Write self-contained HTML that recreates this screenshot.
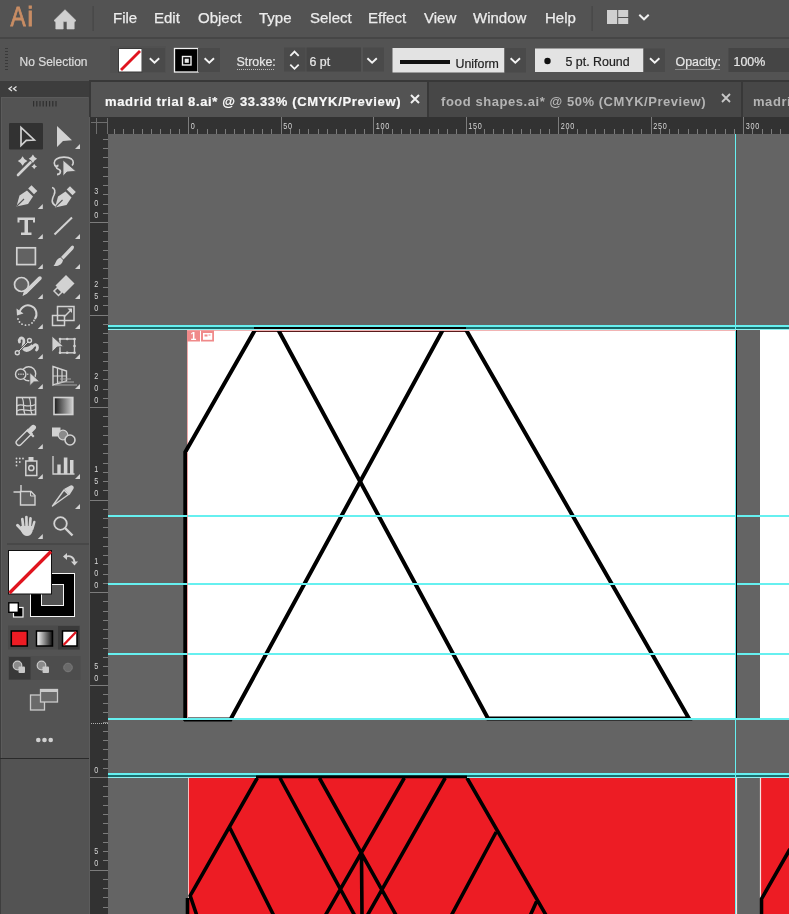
<!DOCTYPE html>
<html><head><meta charset="utf-8">
<style>
*{margin:0;padding:0;box-sizing:border-box}
html,body{width:789px;height:914px;overflow:hidden;background:#535353;font-family:"Liberation Sans",sans-serif}
.a{position:absolute;will-change:transform}
#menubar{left:0;top:0;width:789px;height:38px;background:#535353}
.mi{position:absolute;top:10px;font-size:15px;color:#ececec;line-height:16px;white-space:nowrap;-webkit-text-stroke:0.25px #ececec}
#ctrl{left:0;top:38px;width:789px;height:43px;background:#535353}
.ct{position:absolute;font-size:12.4px;color:#e6e6e6;line-height:14px;white-space:nowrap;-webkit-text-stroke:0.2px currentColor}
.dd{position:absolute;background:#4a4a4a}
#tabs{left:90px;top:81px;width:699px;height:36px;background:#3e3e3e}
#panelhead{left:0;top:81px;width:89px;height:16px;background:#3d3d3d}
#toolbar{left:0;top:97px;width:89px;height:661px;background:#535353}
#hruler{left:91px;top:117px;width:698px;height:17px;background:#323232}
#vruler{left:90px;top:117px;width:18px;height:797px;background:#323232}
#canvas{left:108px;top:134px;width:681px;height:780px;background:#646464;overflow:hidden}
</style></head><body>
<div id="menubar" class="a">
  <svg class="a" style="left:0;top:0" width="60" height="38"><g font-family="Liberation Sans" font-size="27" fill="#c98d64" stroke="#c98d64" stroke-width="0.8"><text x="10.4" y="26.4" textLength="15.2" lengthAdjust="spacingAndGlyphs">A</text><text x="27.2" y="26.4">i</text></g></svg>
<svg class="a" style="left:0;top:0" width="789" height="38">
<path d="M65 9.7L54 20.6L55.8 22.2V29H63.2V21.6H67V29H74.2V22.2L76 20.6Z" fill="#d0d0d0" stroke="#d0d0d0" stroke-width="0.6" stroke-linejoin="round"/>
<rect x="92.5" y="6" width="1.2" height="25" fill="#474747"/>
<rect x="591.5" y="6" width="1.2" height="25" fill="#474747"/>
<rect x="607" y="10" width="10.2" height="14" fill="#d0d0d0"/>
<rect x="618.2" y="10" width="10" height="7" fill="#d0d0d0"/>
<rect x="618.2" y="18" width="10" height="6" fill="#d0d0d0"/>
<path d="M639.3 14.8L644 19.3L648.7 14.8" stroke="#f0f0f0" stroke-width="2" fill="none"/>
</svg>
  <div class="mi" style="left:113px">File</div>
  <div class="mi" style="left:154px">Edit</div>
  <div class="mi" style="left:198px">Object</div>
  <div class="mi" style="left:259px">Type</div>
  <div class="mi" style="left:310px">Select</div>
  <div class="mi" style="left:368px">Effect</div>
  <div class="mi" style="left:424px">View</div>
  <div class="mi" style="left:473px">Window</div>
  <div class="mi" style="left:545px">Help</div>
</div>
<div id="ctrl" class="a"></div>
<div class="a" style="left:0;top:37px;width:789px;height:2px;background:#464646"></div>
<div class="ct" style="left:19.5px;top:55.3px;color:#dcdcdc;font-size:12px">No Selection</div>
<svg class="a" style="left:0;top:38px" width="789" height="43" viewBox="0 38 789 43">
<!-- grip -->
<g fill="#3a3a3a">
<rect x="5" y="48" width="3" height="1"/><rect x="5" y="51" width="3" height="1"/><rect x="5" y="54" width="3" height="1"/><rect x="5" y="57" width="3" height="1"/><rect x="5" y="60" width="3" height="1"/><rect x="5" y="63" width="3" height="1"/><rect x="5" y="66" width="3" height="1"/><rect x="5" y="69" width="3" height="1"/>
</g>
<!-- fill swatch -->
<rect x="110" y="46" width="56" height="27" fill="#505050"/>
<rect x="118.5" y="48.5" width="23.5" height="23.5" fill="#fff" stroke="#3a3a3a" stroke-width="1"/>
<line x1="121" y1="70" x2="140" y2="51" stroke="#e0141e" stroke-width="2.8"/>
<rect x="142" y="48" width="23" height="24" fill="#4a4a4a"/>
<path d="M149.8 58.2L154.5 62.6L159.2 58.2" stroke="#f4f4f4" stroke-width="1.9" fill="none"/>
<!-- stroke swatch -->
<rect x="174.5" y="48.5" width="23.5" height="23.5" fill="#000" stroke="#f0f0f0" stroke-width="1.3"/>
<rect x="182.5" y="56.5" width="8.5" height="8.5" fill="none" stroke="#f0f0f0" stroke-width="1.4"/>
<rect x="184.7" y="58.7" width="4.1" height="4.1" fill="#e8e8e8"/>
<rect x="198" y="48" width="22" height="24" fill="#4a4a4a"/>
<path d="M204.6 58.2L209.3 62.6L214.0 58.2" stroke="#f4f4f4" stroke-width="1.9" fill="none"/>
<!-- stroke label underline -->
<line x1="237" y1="69.5" x2="275" y2="69.5" stroke="#bdbdbd" stroke-width="1" stroke-dasharray="1 1"/>
<!-- spinner -->
<rect x="284" y="47.5" width="21.5" height="24" fill="#4a4a4a"/>
<path d="M290.3 55.8L294.5 51.6L298.7 55.8M290.3 64.6L294.5 68.8L298.7 64.6" stroke="#f4f4f4" stroke-width="1.8" fill="none"/>
<rect x="306.5" y="47.5" width="54.5" height="24" fill="#454545"/>
<rect x="363" y="47.5" width="21" height="24" fill="#4a4a4a"/>
<path d="M367.4 58.2L372.1 62.6L376.8 58.2" stroke="#f4f4f4" stroke-width="1.9" fill="none"/>
<!-- uniform -->
<rect x="392.5" y="48" width="112" height="24.5" fill="#e3e3e3"/>
<rect x="400" y="60" width="50" height="4" fill="#111"/>
<rect x="504.5" y="48" width="21.5" height="24.5" fill="#4a4a4a"/>
<path d="M510.6 58.2L515.3 62.6L520.0 58.2" stroke="#f4f4f4" stroke-width="1.9" fill="none"/>
<!-- 5pt round -->
<rect x="535" y="48.5" width="108.5" height="23.5" fill="#e3e3e3"/>
<circle cx="547.5" cy="61" r="3.2" fill="#111"/>
<rect x="643.5" y="48.5" width="21.5" height="23.5" fill="#4a4a4a"/>
<path d="M650.0 58.2L654.7 62.6L659.4 58.2" stroke="#f4f4f4" stroke-width="1.9" fill="none"/>
<line x1="675.5" y1="69.5" x2="720" y2="69.5" stroke="#bdbdbd" stroke-width="1" stroke-dasharray="1 1"/>
<rect x="728.5" y="48" width="70" height="24" fill="#454545"/>
</svg>
<div class="ct" style="left:236.5px;top:54.5px">Stroke:</div>
<div class="ct" style="left:309.5px;top:55px">6 pt</div>
<div class="ct" style="left:455.5px;top:57px;color:#222">Uniform</div>
<div class="ct" style="left:565.5px;top:55px;color:#222">5 pt. Round</div>
<div class="ct" style="left:675.5px;top:54.5px">Opacity:</div>
<div class="ct" style="left:733.5px;top:55px">100%</div>

<svg class="a" style="left:0;top:80px" width="90" height="834" viewBox="0 80 90 834">
<rect x="0" y="81" width="89" height="16" fill="#3d3d3d"/>
<rect x="0" y="97" width="89" height="817" fill="#535353"/>
<rect x="89" y="81" width="1" height="833" fill="#5c5c5c"/>
<rect x="0" y="97" width="1" height="817" fill="#3e3e3e"/>
<rect x="1" y="97" width="1" height="661" fill="#5b5b5b"/>
<rect x="1" y="97" width="87" height="1" fill="#5b5b5b"/>
<rect x="0" y="758" width="89" height="1" fill="#2a2a2a"/>
<path d="M12 86.5L9 88.7L12 91M16.5 86.5L13.5 88.7L16.5 91" stroke="#e0e0e0" stroke-width="1.3" fill="none"/>
<g fill="#2f2f2f"><rect x="33" y="101" width="1.2" height="5.5"/><rect x="36.2" y="101" width="1.2" height="5.5"/><rect x="39.4" y="101" width="1.2" height="5.5"/><rect x="42.6" y="101" width="1.2" height="5.5"/><rect x="45.8" y="101" width="1.2" height="5.5"/><rect x="49" y="101" width="1.2" height="5.5"/><rect x="52.2" y="101" width="1.2" height="5.5"/><rect x="55.4" y="101" width="1.2" height="5.5"/></g>
<rect x="9" y="123" width="34" height="26.5" rx="1" fill="#323232"/>
<!-- row0 -->
<path d="M21 127.5V145.5L26.3 140.3L34.3 140Z" fill="none" stroke="#d2d2d2" stroke-width="1.7" stroke-linejoin="miter"/>
<path d="M57 126V147L63 141L72 140.2Z" fill="#d2d2d2"/>
<!-- row1 magic wand -->
<line x1="18" y1="175" x2="30.5" y2="162.5" stroke="#d2d2d2" stroke-width="2.6" stroke-linecap="round"/>
<path d="M22.6 156.20Q24.04 159.56 27.40 161Q24.04 162.44 22.6 165.80Q21.16 162.44 17.80 161Q21.16 159.56 22.6 156.20Z" fill="#d2d2d2"/>
<path d="M32.9 154.60Q34.16 157.54 37.10 158.8Q34.16 160.06 32.9 163.00Q31.64 160.06 28.70 158.8Q31.64 157.54 32.9 154.60Z" fill="#d2d2d2"/>
<path d="M34.2 163.70Q35.04 165.66 37.00 166.5Q35.04 167.34 34.2 169.30Q33.36 167.34 31.40 166.5Q33.36 165.66 34.2 163.70Z" fill="#d2d2d2"/>
<!-- lasso -->
<path d="M56.5 167C53.5 165 53.5 161 56.5 159C60 156.5 68 156.5 71.5 159C74 161 73.5 164 72 165.5" fill="none" stroke="#d2d2d2" stroke-width="1.6"/>
<path d="M58.5 165.5C56 165.5 56 168.5 58 169C60 169.5 61 171 60 173C59.3 174.3 58 174.5 57 174.5" fill="none" stroke="#d2d2d2" stroke-width="1.8"/>
<path d="M63 160V176.2L67 172L76 171.3Z" fill="#d2d2d2" stroke="#535353" stroke-width="0.8"/>
<!-- row2 pen -->
<path d="M16.5 206.5L19.5 195.5L27 190.5L33 196.5L28 204Z" fill="#d2d2d2"/>
<path d="M28.2 188.5L31.5 185.2L37.3 191L34 194.3Z" fill="#d2d2d2"/>
<path d="M16.8 206.2L24 199" stroke="#535353" stroke-width="1.1"/>

<!-- curvature -->
<path d="M55 207.5L58 196.5L65.5 191.5L71.5 197.5L66.5 205Z" fill="#d2d2d2"/>
<path d="M66.7 189.5L70 186.2L75.8 192L72.5 195.3Z" fill="#d2d2d2"/>
<path d="M55.3 207.2L62.5 200" stroke="#535353" stroke-width="1.1"/>

<path d="M52 187.5C55 188 55.5 191.5 54 195C52 199 50.5 203 56 206" fill="none" stroke="#d2d2d2" stroke-width="1.6"/>
<!-- row3 type -->
<path d="M17.5 217.5H35V222.5H33V220H28V232.5H31.5V235H21V232.5H24.5V220H19.5V222.5H17.5Z" fill="#d2d2d2"/>
<line x1="54.5" y1="234.5" x2="72" y2="217.5" stroke="#d2d2d2" stroke-width="2"/>
<!-- row4 rect -->
<rect x="16.8" y="247.8" width="18.6" height="16.8" fill="#626262" stroke="#d2d2d2" stroke-width="1.7"/>
<path d="M72.5 245.5C74.5 245.8 74.3 248 73 249.5L63.5 259.5L61 257L70.5 247C71 246.3 71.8 245.5 72.5 245.5Z" fill="#d2d2d2"/>
<path d="M60.5 257.5L63 260C62.5 264 59 266.5 53.5 266C56 264 55.5 259 60.5 257.5Z" fill="#d2d2d2"/>
<!-- row5 shaper -->
<circle cx="21.5" cy="284.5" r="7" fill="#626262" stroke="#d2d2d2" stroke-width="1.7"/>
<path d="M38.5 277.5L40.5 279.5L26.5 293.5L23 295.5L24.5 291.5Z" fill="#d2d2d2"/>
<path d="M24 291L38.5 276.8C39.5 276 40.5 276 41.2 276.8C42 277.6 42 278.6 41.2 279.4L26.8 293.8L22.5 296Z" fill="#d2d2d2"/>
<!-- eraser -->
<path d="M66 275L74.5 283.5L64 294L55.5 285.5Z" fill="#d2d2d2"/>
<path d="M57.5 287.5L62 292L58.5 295.5L54 291Z" fill="#535353" stroke="#d2d2d2" stroke-width="1.5"/>
<!-- row6 rotate -->
<path d="M19.5 313.5A8.5 8.5 0 1 1 34.8 319" fill="none" stroke="#d2d2d2" stroke-width="2"/>
<path d="M16.5 308.5L17 315.5L23.5 313.5Z" fill="#d2d2d2"/>
<g fill="#d2d2d2"><circle cx="18" cy="319" r="0.9"/><circle cx="19.5" cy="322" r="0.9"/><circle cx="22" cy="324.2" r="0.9"/><circle cx="25.5" cy="325.2" r="0.9"/><circle cx="29" cy="324.8" r="0.9"/><circle cx="32" cy="323" r="0.9"/><circle cx="34" cy="320.5" r="0.9"/></g>
<!-- scale -->
<rect x="57.5" y="306.5" width="16.5" height="14" fill="none" stroke="#d2d2d2" stroke-width="1.5"/>
<rect x="52.5" y="315.5" width="12" height="10" fill="none" stroke="#d2d2d2" stroke-width="1.5"/>
<path d="M64 317L71 310" stroke="#d2d2d2" stroke-width="1.4"/>
<path d="M72 308.5L72 313L67.5 308.5Z" fill="#d2d2d2"/>
<!-- row7 puppet -->
<path d="M19.5 342C18.5 339 21 337 23 338.5C25 340 23.5 344 23 346.5C22.7 348.5 24 350.5 26.5 350.5C30 350.5 32 348 33.5 346C35 344 37.5 344.5 37.5 347.5C37.5 348.5 37 349.5 36.5 350" fill="none" stroke="#d2d2d2" stroke-width="2.8" stroke-linecap="round"/>
<path d="M24 348.5C27 349 31 347 32.5 345" fill="none" stroke="#d2d2d2" stroke-width="2.5"/>
<path d="M17.5 352.5L29.5 340.5" stroke="#535353" stroke-width="2.2"/>
<path d="M17.5 352.5L29.5 340.5" stroke="#d2d2d2" stroke-width="1"/>
<circle cx="17.3" cy="352.7" r="2" fill="#535353" stroke="#d2d2d2" stroke-width="1.4"/>
<circle cx="29.5" cy="340.5" r="2" fill="#535353" stroke="#d2d2d2" stroke-width="1.4"/>
<!-- free transform -->
<rect x="60" y="339" width="14.5" height="13.8" fill="none" stroke="#d2d2d2" stroke-width="1.4"/>
<g fill="#d2d2d2"><circle cx="60" cy="339" r="1.3"/><circle cx="67.2" cy="339" r="1.3"/><circle cx="74.5" cy="339" r="1.3"/><circle cx="60" cy="352.8" r="1.3"/><circle cx="67.2" cy="352.8" r="1.3"/><circle cx="74.5" cy="352.8" r="1.3"/><circle cx="74.5" cy="346" r="1.3"/><circle cx="60" cy="346" r="1.3"/></g>
<path d="M52 336V352L57 347L63.5 346.5Z" fill="#d2d2d2" stroke="#535353" stroke-width="0.8"/>
<!-- row8 shape builder -->
<circle cx="28.7" cy="373.8" r="7" fill="#535353" stroke="#d2d2d2" stroke-width="1.4"/>
<circle cx="20.7" cy="374.2" r="5.2" fill="#535353" stroke="#d2d2d2" stroke-width="1.4"/>
<g fill="#d2d2d2"><rect x="18" y="373.6" width="1.4" height="1.2"/><rect x="20.3" y="373.6" width="1.4" height="1.2"/><rect x="22.6" y="373.6" width="1.4" height="1.2"/><rect x="27" y="373.6" width="1.4" height="1.2"/></g>
<path d="M29.8 372.4V385.8L33.8 381.9L39.8 381.8Z" fill="#d2d2d2" stroke="#535353" stroke-width="0.9"/>
<!-- perspective grid -->
<path d="M53 366.5L66.5 371V381L53 385Z" fill="none" stroke="#d2d2d2" stroke-width="1.4"/>
<path d="M57.5 368V383.5M62 369.5V382.5M53 376H66.5" stroke="#d2d2d2" stroke-width="1.2"/>
<path d="M60 379H71M58 382H74M55 385H77" stroke="#a8a8a8" stroke-width="1"/>
<!-- row9 mesh -->
<rect x="16.8" y="397.5" width="18.8" height="17" fill="none" stroke="#d2d2d2" stroke-width="1.6"/>
<path d="M17 406C22 402 26 409 35.5 404.5M17 411C23 407 28 413 35.5 409.5M22 397.5C25 402 22 408 25 414.5M29 397.5C32 402 29 408 32 414.5" stroke="#d2d2d2" stroke-width="1.2" fill="none"/>
<defs><linearGradient id="gr" x1="0" x2="1" y1="0" y2="0"><stop offset="0" stop-color="#1a1a1a"/><stop offset="1" stop-color="#d0d0d0"/></linearGradient>
<linearGradient id="gr2" x1="0" x2="1" y1="0" y2="0"><stop offset="0" stop-color="#ffffff"/><stop offset="1" stop-color="#111"/></linearGradient></defs>
<rect x="54" y="397.5" width="18.8" height="17" fill="url(#gr)" stroke="#d2d2d2" stroke-width="1.6"/>
<!-- row10 eyedropper -->
<path d="M17 444.5C15.5 443 16 441.5 17 440.5L28 429.5L32 433.5L21 444.5C20 445.5 18.5 446 17 444.5Z" fill="none" stroke="#d2d2d2" stroke-width="1.4"/>
<path d="M26 430.5L33 437.5L34.5 436L31.5 433L35 429.5C36.5 428 36.5 426.5 35 425.5C34 424.5 32.5 424.5 31 426L27.5 429.5Z" fill="#d2d2d2"/>
<!-- blend -->
<rect x="52" y="427.5" width="8.5" height="9" fill="#d2d2d2"/>
<circle cx="63" cy="435" r="4.8" fill="#8a8a8a" stroke="#d2d2d2" stroke-width="1.2"/>
<circle cx="70" cy="440" r="5" fill="#535353" stroke="#d2d2d2" stroke-width="1.6"/>
<!-- row11 symbol sprayer -->
<g fill="#d2d2d2"><circle cx="16.5" cy="458.5" r="0.9"/><circle cx="19.8" cy="458.5" r="0.9"/><circle cx="23" cy="458.5" r="0.9"/><circle cx="16.5" cy="462" r="0.9"/><circle cx="19.8" cy="462" r="0.9"/><circle cx="16.5" cy="465.5" r="0.9"/></g>
<rect x="25.8" y="461" width="11" height="14.5" fill="none" stroke="#d2d2d2" stroke-width="1.5"/>
<rect x="28.5" y="457" width="5" height="4" fill="#d2d2d2"/>
<circle cx="31.3" cy="468" r="2.6" fill="none" stroke="#d2d2d2" stroke-width="1.5"/>
<!-- column graph -->
<path d="M53 456V474H74.5" fill="none" stroke="#d2d2d2" stroke-width="1.3"/>
<rect x="57.3" y="464.5" width="3.4" height="9.5" fill="#d2d2d2"/>
<rect x="63.8" y="457.5" width="3.6" height="16.5" fill="#d2d2d2"/>
<rect x="70" y="460" width="3.5" height="14" fill="#d2d2d2"/>
<!-- row12 artboard -->
<path d="M13.5 492H21.5M21 485V492" stroke="#d2d2d2" stroke-width="1.4"/>
<path d="M20.5 491.5H31L35 495.5V505H20.5Z" fill="#626262" stroke="#d2d2d2" stroke-width="1.4"/>
<path d="M30.5 491.5V496H35" fill="none" stroke="#d2d2d2" stroke-width="1"/>
<!-- knife/pencil -->
<path d="M52.5 506L64 490L68.5 494.5Z" fill="none" stroke="#d2d2d2" stroke-width="1.4" stroke-linejoin="round"/>
<path d="M64 489L69.5 486C71 485 72 485 73 486C74 487 74 488 73 489.5L69.5 495Z" fill="#d2d2d2"/>
<!-- row13 hand -->
<g stroke="#d2d2d2" stroke-linecap="round" fill="none">
<line x1="17.5" y1="525.3" x2="22.5" y2="530.5" stroke-width="3"/>
<line x1="22.3" y1="519" x2="23.3" y2="527" stroke-width="2.7"/>
<line x1="26.4" y1="517" x2="26.6" y2="527" stroke-width="2.7"/>
<line x1="30.5" y1="518.3" x2="29.8" y2="527" stroke-width="2.7"/>
<line x1="34.3" y1="522" x2="32.3" y2="529" stroke-width="2.5"/>
</g>
<path d="M21 526H33.3L32.5 531.5C31.5 534.5 29.5 536 27 536C24.5 536 22.5 534.5 21 531Z" fill="#d2d2d2"/>
<!-- zoom -->
<circle cx="60.5" cy="523.5" r="6.3" fill="none" stroke="#d2d2d2" stroke-width="1.8"/>
<line x1="65" y1="528" x2="72.5" y2="535.5" stroke="#d2d2d2" stroke-width="2.4"/>
<!-- flyout triangles -->
<g fill="#d2d2d2">
<path d="M80 144V149H75Z"/><path d="M42.8 204V209H37.8Z"/><path d="M42.8 234V239H37.8Z"/><path d="M80 234V239H75Z"/><path d="M42.8 264V269H37.8Z"/><path d="M80 264V269H75Z"/><path d="M42.8 294V299H37.8Z"/><path d="M80 294V299H75Z"/><path d="M42.8 324V329H37.8Z"/><path d="M80 324V329H75Z"/><path d="M42.8 354V359H37.8Z"/><path d="M80 354V359H75Z"/><path d="M42.8 384V389H37.8Z"/><path d="M80 384V389H75Z"/><path d="M42.8 444V449H37.8Z"/><path d="M42.8 474V479H37.8Z"/><path d="M80 474V479H75Z"/><path d="M80 504V509H75Z"/><path d="M42.8 534V539H37.8Z"/></g>
<rect x="7" y="543.5" width="82" height="1" fill="#3f3f3f"/>
<!-- stroke swatch -->
<rect x="30.5" y="573.5" width="44" height="43" fill="#000" stroke="#f4f4f4" stroke-width="1"/>
<rect x="41.5" y="584.5" width="22" height="21" fill="#535353" stroke="#f4f4f4" stroke-width="1"/>
<!-- fill swatch -->
<rect x="8.5" y="550.5" width="43" height="43.5" fill="#fff" stroke="#111" stroke-width="1"/>
<line x1="9.5" y1="593" x2="51" y2="551.5" stroke="#e0141e" stroke-width="3.3"/>
<!-- swap -->
<path d="M65 557C70 555 74 557 74.5 562" fill="none" stroke="#d2d2d2" stroke-width="1.8"/>
<path d="M63 556.5L67 553V560Z" fill="#d2d2d2"/>
<path d="M71 561.5H78L74.5 565.5Z" fill="#d2d2d2"/>
<!-- default -->
<rect x="13.5" y="607.5" width="9.5" height="9.5" fill="#000" stroke="#f4f4f4" stroke-width="1.2"/>
<rect x="8.8" y="602.8" width="9.5" height="9.5" fill="#fff" stroke="#000" stroke-width="1.4"/>
<!-- color mode row -->
<rect x="8" y="625.5" width="72" height="24" fill="#4a4a4a"/>
<rect x="58" y="626" width="21.5" height="23.5" fill="#3a3a3a"/>
<rect x="11.3" y="631" width="16" height="15" fill="#ed1c24" stroke="#000" stroke-width="1.5"/>
<rect x="36.5" y="631" width="16" height="15" fill="url(#gr2)" stroke="#000" stroke-width="1.5"/>
<rect x="62.5" y="631" width="14.5" height="15" fill="#fff" stroke="#000" stroke-width="1.5"/>
<line x1="63.5" y1="645" x2="76" y2="632" stroke="#e0141e" stroke-width="2.3"/>
<!-- draw mode row -->
<rect x="8" y="656" width="72.5" height="24" fill="#4d4d4d"/>
<rect x="9" y="657" width="21.5" height="22.5" fill="#393939"/>
<circle cx="17.5" cy="665.5" r="4.3" fill="#8a8a8a" stroke="#c8c8c8" stroke-width="1.2"/>
<rect x="18.5" y="666.5" width="6.5" height="6.5" rx="1" fill="#c8c8c8"/>
<circle cx="41.5" cy="665.5" r="4.3" fill="#8a8a8a" stroke="#c8c8c8" stroke-width="1.2"/>
<rect x="42.5" y="666.5" width="6.5" height="6.5" rx="1" fill="#c8c8c8"/>
<circle cx="68" cy="667.5" r="4.3" fill="#6a6a6a" stroke="#7a7a7a" stroke-width="1"/>
<!-- screen mode -->
<rect x="30.5" y="695" width="14" height="15" fill="#6a6a6a" stroke="#cacaca" stroke-width="1.3"/>
<rect x="40.5" y="689.5" width="17" height="12.5" fill="#6a6a6a" stroke="#cacaca" stroke-width="1.3"/>
<rect x="40.5" y="689.5" width="17" height="2.5" fill="#cacaca"/>
<!-- dots -->
<g fill="#d0d0d0"><circle cx="38.3" cy="740" r="2.3"/><circle cx="44.5" cy="740" r="2.3"/><circle cx="50.7" cy="740" r="2.3"/></g>
</svg>

<div class="a" style="left:89px;top:80px;width:700px;height:37px;background:#383838"></div>
<div class="a" style="left:91px;top:82px;width:336px;height:35px;background:#535353"></div>
<div class="a" style="left:429px;top:82px;width:312px;height:35px;background:#474747"></div>
<div class="a" style="left:743px;top:82px;width:60px;height:35px;background:#474747"></div>
<div class="a" style="left:104.5px;top:94.5px;font-size:13px;font-weight:bold;letter-spacing:0.66px;color:#f8f8f8;-webkit-text-stroke:0.2px #f8f8f8;white-space:nowrap;line-height:14px">madrid trial 8.ai* @ 33.33% (CMYK/Preview)</div>
<div class="a" style="left:440.5px;top:94.5px;font-size:13px;font-weight:bold;letter-spacing:0.55px;color:#b4b4b4;white-space:nowrap;line-height:14px">food shapes.ai* @ 50% (CMYK/Preview)</div>
<div class="a" style="left:753px;top:94.5px;font-size:13px;font-weight:bold;letter-spacing:0.55px;color:#b4b4b4;white-space:nowrap;line-height:14px">madrid</div>
<svg class="a" style="left:0;top:0" width="789" height="120">
<path d="M411 95L419 103M419 95L411 103" stroke="#f0f0f0" stroke-width="2"/>
<path d="M722 94L730 102M730 94L722 102" stroke="#c8c8c8" stroke-width="1.8"/>
</svg>

<svg class="a" style="left:0;top:0" width="789" height="914" viewBox="0 0 789 914">
<rect x="90" y="117" width="699" height="17" fill="#323232"/>
<rect x="90" y="117" width="18" height="797" fill="#323232"/>
<path d="M114.6 129V134 M123.8 129V134 M133.1 129V134 M142.3 129V134 M151.6 129V134 M160.8 129V134 M170.1 129V134 M179.3 129V134 M188.6 117V134 M197.8 129V134 M207.1 129V134 M216.3 129V134 M225.6 129V134 M234.8 129V134 M244.1 129V134 M253.3 129V134 M262.6 129V134 M271.9 129V134 M281.1 117V134 M290.4 129V134 M299.6 129V134 M308.9 129V134 M318.1 129V134 M327.4 129V134 M336.6 129V134 M345.9 129V134 M355.1 129V134 M364.4 129V134 M373.6 117V134 M382.9 129V134 M392.1 129V134 M401.4 129V134 M410.6 129V134 M419.9 129V134 M429.1 129V134 M438.4 129V134 M447.6 129V134 M456.9 129V134 M466.1 117V134 M475.4 129V134 M484.6 129V134 M493.9 129V134 M503.1 129V134 M512.4 129V134 M521.6 129V134 M530.9 129V134 M540.1 129V134 M549.4 129V134 M558.6 117V134 M567.9 129V134 M577.1 129V134 M586.4 129V134 M595.6 129V134 M604.9 129V134 M614.1 129V134 M623.4 129V134 M632.6 129V134 M641.9 129V134 M651.1 117V134 M660.4 129V134 M669.6 129V134 M678.9 129V134 M688.1 129V134 M697.4 129V134 M706.6 129V134 M715.9 129V134 M725.1 129V134 M734.4 129V134 M743.6 117V134 M752.9 129V134 M762.1 129V134 M771.4 129V134 M780.6 129V134 M103 139.2H108 M103 148.5H108 M103 157.8H108 M103 167.0H108 M103 176.2H108 M103 185.5H108 M103 194.8H108 M103 204.0H108 M103 213.2H108 M90 222.5H108 M103 231.8H108 M103 241.0H108 M103 250.2H108 M103 259.5H108 M103 268.8H108 M103 278.0H108 M103 287.2H108 M103 296.5H108 M103 305.8H108 M90 315.0H108 M103 324.2H108 M103 333.5H108 M103 342.8H108 M103 352.0H108 M103 361.2H108 M103 370.5H108 M103 379.8H108 M103 389.0H108 M103 398.2H108 M90 407.5H108 M103 416.8H108 M103 426.0H108 M103 435.2H108 M103 444.5H108 M103 453.8H108 M103 463.0H108 M103 472.2H108 M103 481.5H108 M103 490.8H108 M90 500.0H108 M103 509.2H108 M103 518.5H108 M103 527.8H108 M103 537.0H108 M103 546.2H108 M103 555.5H108 M103 564.8H108 M103 574.0H108 M103 583.2H108 M90 592.5H108 M103 601.8H108 M103 611.0H108 M103 620.2H108 M103 629.5H108 M103 638.8H108 M103 648.0H108 M103 657.2H108 M103 666.5H108 M103 675.8H108 M90 685.0H108 M103 694.2H108 M103 703.5H108 M103 712.8H108 M103 722.0H108 M103 731.2H108 M103 740.5H108 M103 749.8H108 M103 759.0H108 M103 768.2H108 M90 777.5H108 M103 786.8H108 M103 796.0H108 M103 805.2H108 M103 814.5H108 M103 823.8H108 M103 833.0H108 M103 842.2H108 M103 851.5H108 M103 860.8H108 M90 870.0H108 M103 879.2H108 M103 888.5H108 M103 897.8H108 M103 907.0H108" stroke="#7c7c7c" stroke-width="1" fill="none" shape-rendering="crispEdges"/>
<g font-family="Liberation Sans" font-size="9.8" fill="#d6d6d6" transform="scale(0.74,1)" style="-webkit-font-smoothing:antialiased"><text x="257.84" y="129" letter-spacing="1">0</text><text x="382.84" y="129" letter-spacing="1">50</text><text x="507.84" y="129" letter-spacing="1">100</text><text x="632.84" y="129" letter-spacing="1">150</text><text x="757.84" y="129" letter-spacing="1">200</text><text x="882.84" y="129" letter-spacing="1">250</text><text x="1007.84" y="129" letter-spacing="1">300</text><text x="127.30" y="194.5">3</text><text x="127.30" y="206.5">0</text><text x="127.30" y="218.5">0</text><text x="127.30" y="287.0">2</text><text x="127.30" y="299.0">5</text><text x="127.30" y="311.0">0</text><text x="127.30" y="379.5">2</text><text x="127.30" y="391.5">0</text><text x="127.30" y="403.5">0</text><text x="127.30" y="472.0">1</text><text x="127.30" y="484.0">5</text><text x="127.30" y="496.0">0</text><text x="127.30" y="564.5">1</text><text x="127.30" y="576.5">0</text><text x="127.30" y="588.5">0</text><text x="127.30" y="669.0">5</text><text x="127.30" y="681.0">0</text><text x="127.30" y="773.5">0</text><text x="127.30" y="854.0">5</text><text x="127.30" y="866.0">0</text></g>
<path d="M96.5 118V134 M91 122.5H108 M107.5 118V134" stroke="#6e6e6e" stroke-width="1" fill="none"/>
<line x1="91" y1="723.5" x2="108" y2="723.5" stroke="#b0b0b0" stroke-width="1" stroke-dasharray="1 1"/>
</svg>
<svg class="a" style="left:0;top:0" width="789" height="914" viewBox="0 0 789 914" shape-rendering="geometricPrecision">
<defs><clipPath id="cc"><rect x="108" y="134" width="681" height="780"/></clipPath></defs>
<g clip-path="url(#cc)">
<rect x="108" y="134" width="681" height="780" fill="#646464"/>
<!-- white artboards -->
<rect x="187" y="330" width="549" height="388" fill="#ffffff"/>
<rect x="760" y="330" width="40" height="388" fill="#ffffff"/>
<!-- red artboards -->
<rect x="188" y="778" width="549" height="140" fill="#ed1c24"/>
<rect x="761" y="778" width="40" height="140" fill="#ed1c24"/>
<!-- artboard borders -->
<line x1="187.5" y1="330" x2="187.5" y2="718" stroke="#f0a8a8" stroke-width="1"/>
<line x1="188.5" y1="778" x2="188.5" y2="914" stroke="#f3c0c0" stroke-width="1"/>
<line x1="736.5" y1="778" x2="736.5" y2="914" stroke="#f8dede" stroke-width="1.2"/>
<line x1="760.5" y1="778" x2="760.5" y2="914" stroke="#f8dede" stroke-width="1.2"/>
<!-- white artboard shape strokes -->
<g stroke="#000" stroke-width="4.0" fill="none" stroke-linejoin="miter" stroke-linecap="butt">
<rect x="256" y="331" width="210" height="1" fill="#5a1a1a" stroke="none"/>
<path d="M185.3 721 L185.3 452 L255.5 329"/>
<path d="M443.3 329 L230.5 719.5 L184 719.5"/>
<path d="M277.8 329 L488 718.5 L689 718.5 L465.6 329"/>
</g>
<line x1="736.5" y1="330" x2="736.5" y2="718" stroke="#000" stroke-width="1"/>
<!-- red artboard strokes -->
<g stroke="#000" stroke-width="3.6" fill="none" stroke-linejoin="miter">
<path d="M256 776.5 L467 776.5 M257.3 778 L190.2 895.7 L197 916 M229.4 827 L274 916 M280 778 L355 916 M319.4 778 L396.5 916 M404.3 778 L325 916 M361.5 854 L362 916 M445.2 778 L367 916 M467 778 L546.5 916 M496.2 832 L451 916 M537 900.6 L530 916 M187.5 898 L187.5 916"/>
<path d="M790 849 L761.5 898.9 L761.5 916"/>
</g>
<!-- guides -->
<rect x="108" y="325" width="681" height="2" fill="#66f0f0"/>
<rect x="108" y="327" width="681" height="2" fill="#1b6e6e"/>
<rect x="108" y="329" width="681" height="1" fill="#8ef2f2"/>
<rect x="108" y="515" width="681" height="2" fill="#66f0f0"/>
<rect x="108" y="583" width="681" height="2" fill="#66f0f0"/>
<rect x="108" y="653" width="681" height="2" fill="#66f0f0"/>
<rect x="108" y="718" width="681" height="2" fill="#66f0f0"/>
<rect x="108" y="773" width="681" height="2" fill="#66f0f0"/>
<rect x="108" y="775" width="681" height="2" fill="#1b6e6e"/>
<rect x="108" y="777" width="681" height="1" fill="#8ef2f2"/>
<rect x="735" y="134" width="1" height="780" fill="#66f0f0"/>
<rect x="736" y="330" width="1" height="388" fill="#000"/>
<rect x="254" y="327" width="212" height="2" fill="#000"/>
<rect x="256" y="775.5" width="211" height="2.5" fill="#000"/>
<rect x="187" y="330" width="549" height="1" fill="#f2b4b4"/>
<rect x="187" y="452" width="1" height="266" fill="#e9a0a0"/>
<!-- artboard label -->
<rect x="187" y="330.5" width="13" height="11" fill="#f08a8a"/>
<text x="190.5" y="340" font-size="10.5" font-weight="bold" fill="#fff" font-family="Liberation Sans">1</text>
<rect x="201" y="330.5" width="13" height="11" fill="#f08a8a"/>
<rect x="203" y="333" width="9.2" height="6.8" fill="#fff"/>
<rect x="204.5" y="334.5" width="3" height="2" fill="#f08a8a"/>
<rect x="208.5" y="334.5" width="2" height="1" fill="#f08a8a"/>
</g>
</svg>

</body></html>
